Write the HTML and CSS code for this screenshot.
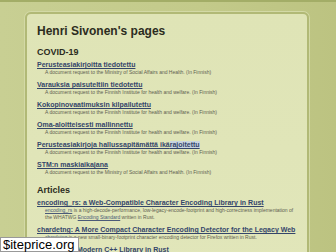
FILE: index.html
```html
<html>
    <head>
        <title>Henri Sivonen's pages</title>
        <link rel="stylesheet" href="styles.css">
    </head>
    <body>
        <div class="pagina">
            <div class="caja">
                <h1>Henri Sivonen's pages</h1>
                <h2>COVID-19</h2>
                <dl class="lista">
                    <dt><a href="#">Perusteasiakirjoitta tiedotettu</a></dt>
                    <dd>A document request to the Ministry of Social Affairs and Health. (In Finnish)</dd>
                    <dt><a href="#">Varauksia paisuteltiin tiedotettu</a></dt>
                    <dd>A document request to the Finnish Institute for health and welfare. (In Finnish)</dd>
                    <dt><a href="#">Kokopinovaatimuksin kilpailutettu</a></dt>
                    <dd>A document request to the Finnish Institute for health and welfare. (In Finnish)</dd>
                    <dt><a href="#">Oma-aloitteisesti mallinnettu</a></dt>
                    <dd>A document request to the Finnish Institute for health and welfare. (In Finnish)</dd>
                    <dt><a href="#">Perusteasiakirjoja hallussapitämättä ikä<span class="marcado">rajoitettu</span></a></dt>
                    <dd>A document request to the Finnish Institute for health and welfare. (In Finnish)</dd>
                    <dt><a href="#">STM:n maskiaikajana</a></dt>
                    <dd>A document request to the Ministry of Social Affairs and Health. (In Finnish)</dd>
                </dl>
                <h2>Articles</h2>
                <dl class="lista">
                    <dt><a href="#">encoding_rs: a Web-Compatible Character Encoding Library in Rust</a></dt>
                    <dd><a href="#">encoding_rs</a> is a high-decode-performance, low-legacy-encode-footprint and high-correctness implementation of the WHATWG <a href="#">Encoding Standard</a> written in Rust.</dd>
                    <dt><a href="#">chardetng: A More Compact Character Encoding Detector for the Legacy Web</a></dt>
                    <dd><a href="#">chardetng</a> is a new small-binary-footprint character encoding detector for Firefox written in Rust.</dd>
                    <dt><a href="#">Wrapping a Modern C++ Library in Rust</a></dt>
                    <dd>How the encoding_rs C++ API was made to feel like a modern C++ library.</dd>
                </dl>
            </div>
        </div>
        <div class="sello">$iteprice.org</div>
    </body>
</html>
```

FILE: styles.css
```css
html{
    background: #c4cb8c;
}
body{
    margin: 0;
    font-family: "Liberation Sans", Arial, sans-serif;
    overflow: hidden;
}
    .pagina{
        border-top: 2px solid #a3ad67;
        background: linear-gradient(to right, #c8cf93, #c3ca8a 60%, #bcc381);
        padding: 10px 27px 0 25px;
        min-height: 260px;
    }
    .caja{
        background: linear-gradient(to bottom, #dfe4b6, #e1e6ba);
        border: 2px solid #b1b976;
        box-shadow: 0 0 0 1px #d3d9a6;
        border-radius: 6px;
        padding: 10px 6px 20px 10px;
    }
    h1{
        font-size: 12px;
        line-height: 14px;
        color: #2c2c1e;
        margin: 0 0 8px 0;
    }
    h2{
        font-size: 9px;
        line-height: 11px;
        color: #2c2c1e;
        margin: 9px 0 2px 0;
    }
    .lista{
        margin: 0;
    }
    .lista dt{
        font-size: 7px;
        line-height: 9px;
        font-weight: bold;
    }
    .lista dt a{
        color: #34456a;
    }
    .lista dd{
        font-size: 5px;
        line-height: 7px;
        color: #5e5e50;
        margin: 0 0 4px 8px;
    }
    .lista dd a{
        color: #4b5a78;
    }
    .marcado{
        background: #c8d4df;
    }
    .sello{
        position: absolute;
        left: 0;
        bottom: 0;
        background: #fff;
        border: 1px solid #999;
        color: #000;
        font-size: 13px;
        line-height: 13px;
        padding: 0 3px 0 2px;
    }
```
